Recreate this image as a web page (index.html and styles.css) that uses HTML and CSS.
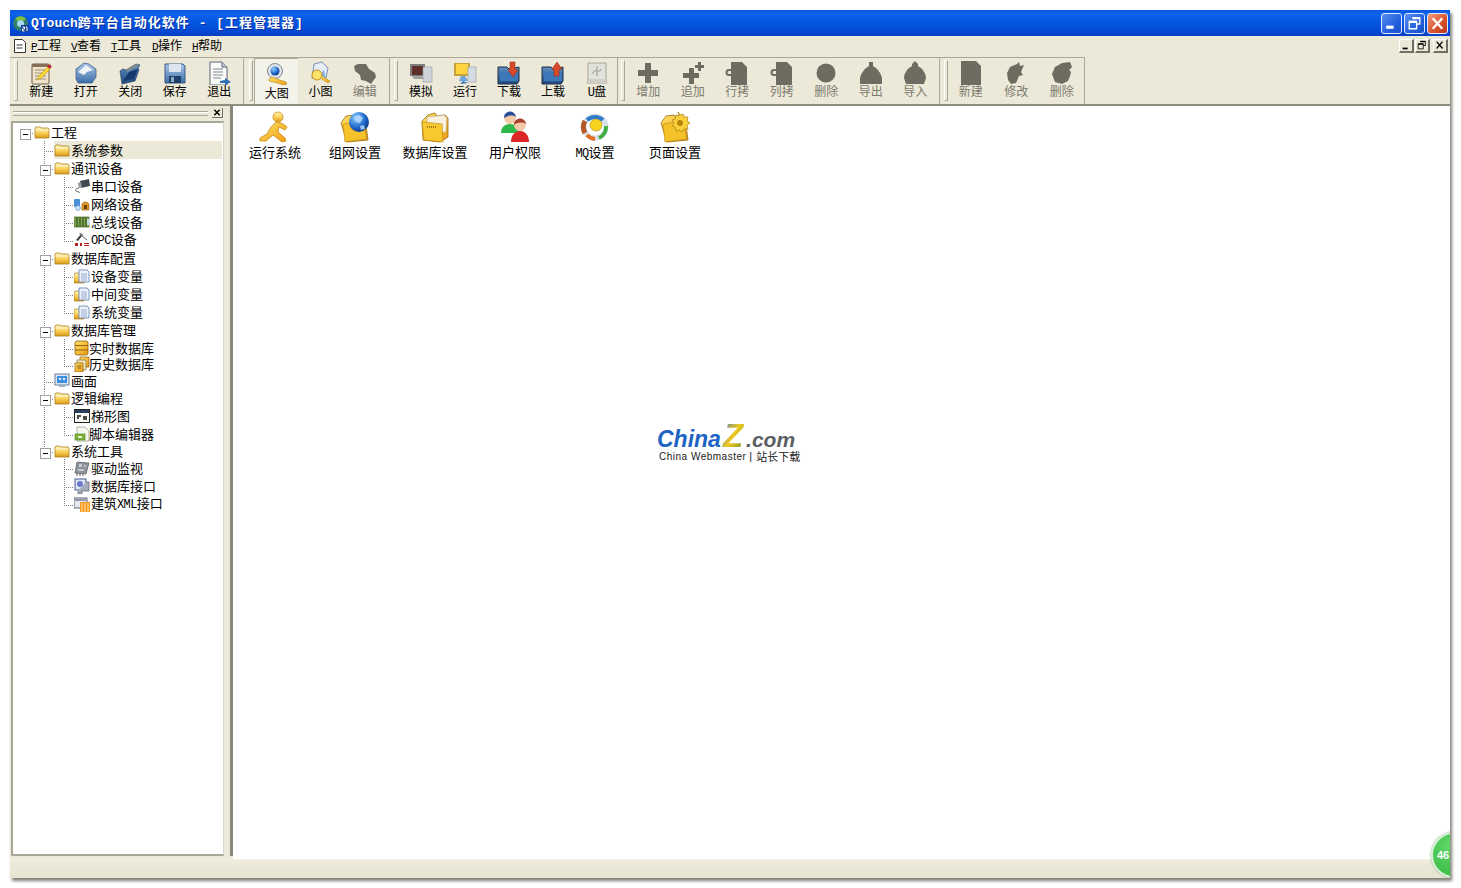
FILE: index.html
```html
<!DOCTYPE html>
<html lang="zh-CN">
<head>
<meta charset="utf-8">
<title>QTouch跨平台自动化软件</title>
<link rel="stylesheet" href="styles.css">
</head>
<body>
<svg class="defs" xmlns="http://www.w3.org/2000/svg">
<defs>
<linearGradient id="gy" x1="0" y1="0" x2="0" y2="1"><stop offset="0" stop-color="#fff3b8"/><stop offset=".5" stop-color="#fbd35c"/><stop offset="1" stop-color="#dd9a18"/></linearGradient>
<linearGradient id="ga" x1="0" y1="0" x2="1" y2="1"><stop offset="0" stop-color="#ffe36a"/><stop offset="1" stop-color="#ee9a10"/></linearGradient>
<linearGradient id="gb" x1="0" y1="0" x2="0" y2="1"><stop offset="0" stop-color="#a9c6ea"/><stop offset="1" stop-color="#3f6fa8"/></linearGradient>
<linearGradient id="gd" x1="0" y1="0" x2="0" y2="1"><stop offset="0" stop-color="#5f8fc0"/><stop offset="1" stop-color="#1f4a80"/></linearGradient>
<radialGradient id="gg" cx=".35" cy=".3" r=".8"><stop offset="0" stop-color="#8fd0ff"/><stop offset=".6" stop-color="#1f66c8"/><stop offset="1" stop-color="#0b2f7a"/></radialGradient>

<symbol id="t-new" viewBox="0 0 24 24"><rect x="3" y="3" width="17" height="20" rx="1" fill="#efe3c8" stroke="#6a5a48"/><rect x="3" y="3" width="17" height="3" fill="#8a6f58"/><path d="M6 9h11M6 12h11M6 15h11M6 18h11" stroke="#9a8f80"/><path d="M8 19l2-4 9-9 2 2-9 9z" fill="#ffd92a" stroke="#b89a10" stroke-width=".6"/><circle cx="20.500" cy="5.500" r="2" fill="#b5302a"/></symbol>
<symbol id="t-open" viewBox="0 0 24 24"><path d="M2 8l8-6 5 1 7 5v8l-4 6H4L2 18z" fill="url(#gb)" stroke="#33587f" stroke-width=".7"/><path d="M4 11l8-7 7 5-6 2-3 3z" fill="#eef3f8"/></symbol>
<symbol id="t-close" viewBox="0 0 24 24"><path d="M2 10l3-2 3 1L18 3l4 1-2 3 1 2-4 11-13 3z" fill="url(#gd)" stroke="#27405f" stroke-width=".7"/><path d="M5 20l6-9 9-3-4 10z" fill="#123a6c"/><path d="M8 9l10-6 3 1-12 7z" fill="#8a8f8a"/></symbol>
<symbol id="t-save" viewBox="0 0 24 24"><path d="M2 3h18l2 2v17H2z" fill="url(#gb)" stroke="#3b5a80"/><rect x="6" y="3" width="12" height="8" fill="#dde6f0"/><rect x="6" y="15" width="12" height="7" fill="#1f3f6a"/><rect x="8" y="16" width="3" height="5" fill="#8fa8c6"/></symbol>
<symbol id="t-exit" viewBox="0 0 24 24"><path d="M3 1h12l5 5v18H3z" fill="#fafaf6" stroke="#5a6478"/><path d="M15 1v5h5" fill="#c5cdd8" stroke="#5a6478"/><path d="M6 8h10M6 11h10M6 14h10M6 17h8" stroke="#7f8796"/><path d="M13 20l5-1v-2l6 4-6 3v-2h-5z" fill="#2f6eb5"/></symbol>
<symbol id="t-large" viewBox="0 0 24 24"><circle cx="10" cy="9" r="7.500" fill="#dfe3e8" stroke="#7d8794"/><circle cx="10" cy="9" r="4.500" fill="url(#gg)"/><path d="M4 17l3-2 5 2 3 1 6 2 1 2-3 1-7-2-8-2z" fill="url(#ga)" stroke="#a87a12" stroke-width=".5"/></symbol>
<symbol id="t-small" viewBox="0 0 24 24"><path d="M6 3l8-2 6 6-2 10H4z" fill="#e6edf7" stroke="#7a8fb0"/><path d="M4 16l3-6 5 3 4-4 2 9H5z" fill="#7fb3e6"/><circle cx="9" cy="14" r="5" fill="#ffe36a" stroke="#c48f1a"/><path d="M12 17l8 5 2-2-8-5z" fill="url(#ga)" stroke="#a87a12" stroke-width=".5"/></symbol>
<symbol id="t-blob1" viewBox="0 0 24 24"><path d="M1 5l4-2 8 0 3 5 6 4 1 4-5 7-5-3-5-1-1-5-5-4z" fill="#6e6b60"/></symbol>
<symbol id="t-sim" viewBox="0 0 24 24"><rect x="1" y="3" width="15" height="12" fill="#7f7f7f"/><rect x="3" y="5" width="11" height="9" fill="#5e2f2a"/><rect x="14" y="6" width="9" height="15" fill="#cfd4da" stroke="#8f98a5" stroke-width=".6"/><path d="M3 15h10l2 3H5z" fill="#a0a0a0"/></symbol>
<symbol id="t-run" viewBox="0 0 24 24"><rect x="1" y="2" width="16" height="13" fill="#c9a13a"/><rect x="3" y="3" width="12" height="10" fill="#ffd23f"/><rect x="15" y="6" width="8" height="15" fill="#d4dbe3" stroke="#8f98a5" stroke-width=".6"/><path d="M8 15h4l3 5H6z" fill="#6fa4d8"/><path d="M10 20l5 2-8 1z" fill="#2f6eb5"/></symbol>
<symbol id="t-down" viewBox="0 0 24 24"><path d="M1 6l9 0 2 2 10-2v14l-2 3H1z" fill="url(#gd)" stroke="#1c2f48"/><path d="M3 11h18v9H3z" fill="#3d79b8"/><path d="M13 1h5v7l3 1-5 7-5-7 2-1z" fill="#d84a2a" stroke="#8a2612" stroke-width=".5"/></symbol>
<symbol id="t-up" viewBox="0 0 24 24"><path d="M1 6l9 0 2 2 10-2v14l-2 3H1z" fill="url(#gd)" stroke="#1c2f48"/><path d="M3 11h18v9H3z" fill="#3d79b8"/><path d="M16 1l5 7-3 1v6h-5V9l-2-1z" fill="#d84a2a" stroke="#8a2612" stroke-width=".5"/></symbol>
<symbol id="t-usb" viewBox="0 0 24 24"><path d="M3 2h18v16l1 4H2l1-4z" fill="#e2e2dc" stroke="#a5a59c"/><path d="M3 18h18l1 4H2z" fill="#cfcfc8"/><path d="M12 5v10M12 9l-4 2v2M12 11l4-2v-1" fill="none" stroke="#9a9a92"/></symbol>
<symbol id="t-plus" viewBox="0 0 24 24"><path d="M9 2h6v7h7v6h-7v7H9v-7H2V9h7z" fill="#6e6b60"/></symbol>
<symbol id="t-plus2" viewBox="0 0 24 24"><path d="M8 7h5v5h5v5h-5v6H8v-6H2v-5h6z" fill="#6e6b60"/><path d="M17 1h3v3h3v3h-3v3h-3V7h-3V4h3z" fill="#6e6b60"/></symbol>
<symbol id="t-copy" viewBox="0 0 24 24"><path d="M6 1h11l5 5v18H6v-9H4a3 3 0 0 1 0-7h2zM4 10a1.500 1.500 0 0 0 0 3h2v-3z" fill="#6e6b60" fill-rule="evenodd"/></symbol>
<symbol id="t-circle" viewBox="0 0 24 24"><circle cx="12" cy="12" r="9.500" fill="#6e6b60"/></symbol>
<symbol id="t-bag" viewBox="0 0 24 24"><path d="M10 1h4v4c4 2 8 7 9 12v6H1v-6C2 12 6 7 10 5z" fill="#6e6b60"/></symbol>
<symbol id="t-bag2" viewBox="0 0 24 24"><path d="M12 0l3 3v2c4 2 8 7 8 12l-2 6H3l-2-6C1 12 5 7 9 5V3z" fill="#6e6b60"/></symbol>
<symbol id="t-page" viewBox="0 0 24 24"><path d="M2 0h15l5 5v19H2z" fill="#6e6b60"/></symbol>
<symbol id="t-blob2" viewBox="0 0 24 24"><path d="M3 12l3-6 7-3 2-2 1 4 4-1-3 7 2 3-4 1-3 7-5 1-3-4z" fill="#6e6b60"/></symbol>
<symbol id="t-blob3" viewBox="0 0 24 24"><path d="M2 13l3-7 7-4 8-1 2 5-3 3 2 2-1 4-2 5-6 3-7-2z" fill="#6e6b60"/></symbol>

<symbol id="b-run" viewBox="0 0 32 32"><circle cx="19" cy="6" r="5" fill="url(#gy)" stroke="#d48f10" stroke-width=".8"/><path d="M17 11c4 0 8 2 11 5l-2 3-6-3-1 5 7 6 1 3-4 1-9-7-7 6-6 0 0-3 7-4 4-7z" fill="url(#ga)" stroke="#c98a10" stroke-width=".8"/></symbol>
<symbol id="b-folder" viewBox="0 0 32 32"><path d="M2 12l5-7 8-1 2 3 9 0 3 22-21 2z" fill="url(#ga)" stroke="#9a6d0c" stroke-width=".8"/><path d="M6 31L4 13l20-3 4 18z" fill="#f6c22a" stroke="#b5860e" stroke-width=".6"/></symbol>
<symbol id="b-net" viewBox="0 0 32 32"><use href="#b-folder" width="32" height="32"/><circle cx="20" cy="11" r="10" fill="url(#gg)"/><path d="M15 6l5-2 4 3-3 5-4-1zM21 15l4-1 1 4-4 1z" fill="#bcdcff" opacity=".8"/></symbol>
<symbol id="b-db" viewBox="0 0 32 32"><path d="M3 10l6-6 7-2 2 3 8-1 3 3v19l-8 5-17-2z" fill="url(#ga)" stroke="#9a6d0c" stroke-width=".8"/><path d="M8 6l17-2 3 3-1 14-19 2z" fill="#f8f0dc" stroke="#b8a070" stroke-width=".6"/><path d="M3 11l20 2 1 18-19-2z" fill="#f9c730" stroke="#b5860e" stroke-width=".6"/><path d="M8 16h10" stroke="#8a6410" stroke-width="1.500" stroke-dasharray="1 1"/></symbol>
<symbol id="b-user" viewBox="0 0 32 32"><circle cx="11" cy="7" r="6" fill="#f3c9a8"/><path d="M5 7a6 6 0 0 1 12-1c-3-2-8-2-12 1z" fill="#2c4d9a"/><path d="M2 22c0-6 4-9 9-9s9 3 9 9z" fill="#2fb84a"/><circle cx="21" cy="14" r="6" fill="#f3c9a8"/><path d="M15 14a6 6 0 0 1 12-1c-3-2-8-2-12 1z" fill="#a8412c"/><path d="M12 31c0-7 4-11 9-11s9 4 9 11z" fill="#dc2626"/></symbol>
<symbol id="b-mq" viewBox="0 0 32 32"><circle cx="16" cy="16" r="11" fill="none" stroke="#d8dfe8" stroke-width="5"/><path d="M8 9a12 12 0 0 1 16 0" fill="none" stroke="#2e7cc8" stroke-width="4"/><path d="M27 15a12 12 0 0 1-7 12" fill="none" stroke="#3fae3f" stroke-width="4"/><path d="M6 22a12 12 0 0 1 0-12" fill="none" stroke="#b45a28" stroke-width="5"/><path d="M8 24a12 12 0 0 0 8 4" fill="none" stroke="#e0702a" stroke-width="4"/><circle cx="17" cy="14" r="6" fill="#f6d21f" stroke="#a88b0e" stroke-width=".6"/></symbol>
<symbol id="b-page" viewBox="0 0 32 32"><use href="#b-folder" width="32" height="32"/><path d="M19 1l2 3 3-1 1 3 4 0-1 4 3 2-3 2 1 4-4 0-2 3-3-2-3 1-1-4-3-1 2-3-2-3 3-1 1-4 3 1z" fill="#f9cf3a" stroke="#a87a10" stroke-width=".7"/><circle cx="21" cy="12" r="3" fill="#b5860e"/></symbol>

<symbol id="s-folder" viewBox="0 0 16 16"><path d="M1 14V4l1-1h4l1 1h7l1 1v9z" fill="url(#gy)" stroke="#a98024" stroke-width=".8"/><path d="M1.500 6h13" stroke="#fff8d8"/></symbol>
<symbol id="s-serial" viewBox="0 0 16 16"><path d="M6 3l9-2 1 7-9 2z" fill="#3f4a50"/><path d="M4 5l3-1 1 5-3 1z" fill="#8d989f"/><path d="M5 10c-3 0-4 2-3 3s4 0 3 2" fill="none" stroke="#55585a"/></symbol>
<symbol id="s-net" viewBox="0 0 16 16"><rect x="0" y="3" width="6" height="8" rx="1" fill="#4a8fd8"/><circle cx="4" cy="12" r="2.500" fill="#c8e0f8" stroke="#5a8abf" stroke-width=".5"/><path d="M8 8a4 4 0 0 1 7 0v6H8z" fill="#e09a22" stroke="#8a5a10" stroke-width=".6"/><rect x="10" y="9" width="3" height="4" fill="#6a3f08"/></symbol>
<symbol id="s-bus" viewBox="0 0 16 16"><rect x="0" y="3" width="15" height="10" fill="#7fa84a" stroke="#4a6a2a" stroke-width=".7"/><path d="M3 3v10M6 3v10M9 3v10M12 3v10" stroke="#23401a"/><path d="M13 5h3v6h-3z" fill="#c8d8e8"/></symbol>
<symbol id="s-opc" viewBox="0 0 16 16"><path d="M2 8l5-6 1.500 1.500L4 9z" fill="#444"/><path d="M5 1l4 1-1 3z" fill="#777"/><path d="M8 4l5 4" stroke="#666"/><path d="M1 11h3v3H1zM6 11h2v3H6zM10 11h5v1h-5zM10 13h5v1h-5z" fill="#c0201a"/></symbol>
<symbol id="s-var" viewBox="0 0 16 16"><path d="M0 15V6l1-1h4l1 1h4v9z" fill="url(#gy)" stroke="#a98024" stroke-width=".7"/><path d="M5 2h8l2 2v10H5z" fill="#eef3fa" stroke="#5a7fae" stroke-width=".8"/><path d="M7 6h6M7 8h6M7 10h6M7 12h6" stroke="#7d9cc4" stroke-width=".8"/></symbol>
<symbol id="s-db" viewBox="0 0 16 16"><rect x="1" y="1" width="13" height="14" rx="2" fill="url(#ga)" stroke="#8a5f10" stroke-width=".8"/><path d="M1 5.500h13M1 10h13" stroke="#8a5f10"/></symbol>
<symbol id="s-hist" viewBox="0 0 16 16"><path d="M6 1h9v10H6z" fill="url(#ga)" stroke="#8a5f10" stroke-width=".7"/><path d="M3 4h9v10H3z" fill="#f2e2b8" stroke="#8a7340" stroke-width=".7"/><path d="M1 7h8v9H1z" fill="url(#ga)" stroke="#8a5f10" stroke-width=".7"/><path d="M3 10h4M3 12h4" stroke="#8a5f10"/></symbol>
<symbol id="s-screen" viewBox="0 0 16 16"><rect x="1" y="1" width="14" height="11" fill="#dbe4f0" stroke="#6a7f9a"/><rect x="3" y="3" width="10" height="7" fill="#3f8fe0"/><path d="M5 5h2v2H5zM9 5h2v2H9z" fill="#dff0ff"/><path d="M5 12h6v2H5z" fill="#9eb0c6"/></symbol>
<symbol id="s-ladder" viewBox="0 0 16 16"><rect x=".500" y="1.500" width="15" height="13" fill="#f8f8f4" stroke="#222"/><rect x="1" y="2" width="14" height="3" fill="#28405e"/><path d="M3 8h4M3 10h2M9 9h4M9 11h4" stroke="#111" stroke-width="1.500"/></symbol>
<symbol id="s-script" viewBox="0 0 16 16"><path d="M3 1h8l4 4v10H3z" fill="#f4f7ee" stroke="#9aa58a" stroke-width=".8"/><rect x="1" y="8" width="10" height="6" fill="#7db23a" stroke="#55801f" stroke-width=".6"/><rect x="4" y="10" width="4" height="2" fill="#e8f4c8"/></symbol>
<symbol id="s-driver" viewBox="0 0 16 16"><path d="M3 2l12 1-3 11-11-1z" fill="#8e9299" stroke="#585c62" stroke-width=".7"/><path d="M5 4h3v3H5zM10 5h2v2h-2zM4 9h6v2H4z" fill="#c8ccd2"/><path d="M3 13v3M6 13v3M9 14v2" stroke="#585c62"/></symbol>
<symbol id="s-port" viewBox="0 0 16 16"><rect x="1" y="1" width="11" height="11" fill="#dfe5f4" stroke="#4a5f96"/><circle cx="6" cy="6" r="3" fill="#6a7ac8"/><path d="M12 4h3v9H8v3H4v-3" fill="#a6adba" stroke="#5a606c" stroke-width=".7"/></symbol>
<symbol id="s-xml" viewBox="0 0 16 16"><rect x="0" y="2" width="13" height="10" fill="#e6eaf0" stroke="#5a6474"/><rect x="1" y="3" width="11" height="2" fill="#8f9aae"/><rect x="6" y="6" width="10" height="10" fill="#f59a1e"/><path d="M8 7v9M11 7v9M14 7v9" stroke="#fde0a8"/></symbol>
</defs>
</svg>

<div class="window">
  <header class="titlebar">
    <svg class="app-icon" viewBox="0 0 16 16"><circle cx="7.500" cy="7.500" r="7.500" fill="#2f7f6a"/><circle cx="7.500" cy="7.500" r="3.500" fill="#a8d8ef"/><path d="M2 3a7 7 0 0 1 11 0l-3 2a4 4 0 0 0-5 0z" fill="#7fc23f"/><rect x="8" y="9" width="8" height="7" fill="#123f9e"/><path d="M9.500 11h2v2h-2v2h2M13 11h1v4" fill="none" stroke="#fff"/></svg>
    <h1 class="title"><span class="lat">QTouch</span>跨平台自动化软件<span class="lat2"> - [</span>工程管理器<span class="lat2">]</span></h1>
    <div class="win-btns">
      <span class="wb"><svg viewBox="0 0 18 18"><rect x="4" y="11" width="7" height="3" fill="#fff"/></svg></span>
      <span class="wb wb-max"><svg viewBox="0 0 18 18"><path d="M7 3.500h7v6h-3M4 7h7v7H4z" fill="none" stroke="#fff" stroke-width="1.300"/><path d="M7 4h7M4 7.500h7" stroke="#fff" stroke-width="2"/></svg></span>
      <span class="wb wb-close"><svg viewBox="0 0 18 18"><path d="M4.500 4l9 10M13.500 4l-9 10" stroke="#fff" stroke-width="2.200"/></svg></span>
    </div>
  </header>

  <nav class="menubar">
    <svg class="menu-icon" viewBox="0 0 14 14"><path d="M1.500.5h8l3 3v10h-11z" fill="#fff" stroke="#333"/><path d="M3.500 6h6M3.500 9h6" stroke="#333"/></svg>
    <span class="menu"><u class="k">P</u>工程</span>
    <span class="menu"><u class="k">V</u>查看</span>
    <span class="menu m3"><u class="k">T</u>工具</span>
    <span class="menu"><u class="k">D</u>操作</span>
    <span class="menu"><u class="k">H</u>帮助</span>
    <div class="mdi-btns">
      <span class="mb"><svg viewBox="0 0 14 13"><rect x="3" y="9" width="6" height="2" fill="#000"/></svg></span>
      <span class="mb"><svg viewBox="0 0 14 13"><path d="M5 1.500h6v5H9M2.500 4.500h6v6h-6z" fill="none" stroke="#000"/><path d="M5 2h6M2.500 5h6" stroke="#000" stroke-width="1.500"/></svg></span>
      <span class="mb mb-x"><svg viewBox="0 0 14 13"><path d="M3 2l7 8M10 2l-7 8" stroke="#000" stroke-width="1.500"/></svg></span>
    </div>
  </nav>

  <div class="toolbar">
    <div class="tgroup g1"><i class="grip"></i>
      <div class="tbtn"><svg class="ticon"><use href="#t-new"/></svg><span>新建</span></div>
      <div class="tbtn"><svg class="ticon"><use href="#t-open"/></svg><span>打开</span></div>
      <div class="tbtn"><svg class="ticon"><use href="#t-close"/></svg><span>关闭</span></div>
      <div class="tbtn"><svg class="ticon"><use href="#t-save"/></svg><span>保存</span></div>
      <div class="tbtn"><svg class="ticon"><use href="#t-exit"/></svg><span>退出</span></div>
    </div>
    <div class="tgroup g2"><i class="grip"></i>
      <div class="tbtn pressed"><svg class="ticon"><use href="#t-large"/></svg><span>大图</span></div>
      <div class="tbtn"><svg class="ticon"><use href="#t-small"/></svg><span>小图</span></div>
      <div class="tbtn off"><svg class="ticon"><use href="#t-blob1"/></svg><span>编辑</span></div>
    </div>
    <div class="tgroup g3"><i class="grip"></i>
      <div class="tbtn"><svg class="ticon"><use href="#t-sim"/></svg><span>模拟</span></div>
      <div class="tbtn"><svg class="ticon"><use href="#t-run"/></svg><span>运行</span></div>
      <div class="tbtn"><svg class="ticon"><use href="#t-down"/></svg><span>下载</span></div>
      <div class="tbtn"><svg class="ticon"><use href="#t-up"/></svg><span>上载</span></div>
      <div class="tbtn"><svg class="ticon"><use href="#t-usb"/></svg><span><span class="lat">U</span>盘</span></div>
    </div>
    <div class="tgroup g4"><i class="grip"></i>
      <div class="tbtn off"><svg class="ticon"><use href="#t-plus"/></svg><span>增加</span></div>
      <div class="tbtn off"><svg class="ticon"><use href="#t-plus2"/></svg><span>追加</span></div>
      <div class="tbtn off"><svg class="ticon"><use href="#t-copy"/></svg><span>行拷</span></div>
      <div class="tbtn off"><svg class="ticon"><use href="#t-copy"/></svg><span>列拷</span></div>
      <div class="tbtn off"><svg class="ticon"><use href="#t-circle"/></svg><span>删除</span></div>
      <div class="tbtn off"><svg class="ticon"><use href="#t-bag"/></svg><span>导出</span></div>
      <div class="tbtn off"><svg class="ticon"><use href="#t-bag2"/></svg><span>导入</span></div>
    </div>
    <div class="tgroup g5"><i class="grip"></i>
      <div class="tbtn off"><svg class="ticon"><use href="#t-page"/></svg><span>新建</span></div>
      <div class="tbtn off"><svg class="ticon"><use href="#t-blob2"/></svg><span>修改</span></div>
      <div class="tbtn off"><svg class="ticon"><use href="#t-blob3"/></svg><span>删除</span></div>
    </div>
  </div>

  <div class="content">
    <aside class="dock">
      <div class="dock-head"><i class="dock-grip"></i><span class="dock-x"><svg viewBox="0 0 11 10"><path d="M2.500 2l6 6M8.500 2l-6 6" stroke="#000" stroke-width="1.600"/></svg></span></div>
      <div class="tree">
        <div class="row"><i class="c xr"></i><div class="node"><svg class="nicon"><use href="#s-folder"/></svg><span class="lbl">工程</span></div></div>
        <div class="row"><i class="c"></i><i class="c t"></i><div class="node sel"><svg class="nicon"><use href="#s-folder"/></svg><span class="lbl">系统参数</span></div></div>
        <div class="row"><i class="c"></i><i class="c x"></i><div class="node"><svg class="nicon"><use href="#s-folder"/></svg><span class="lbl">通讯设备</span></div></div>
        <div class="row"><i class="c"></i><i class="c v"></i><i class="c t"></i><div class="node"><svg class="nicon"><use href="#s-serial"/></svg><span class="lbl">串口设备</span></div></div>
        <div class="row"><i class="c"></i><i class="c v"></i><i class="c t"></i><div class="node"><svg class="nicon"><use href="#s-net"/></svg><span class="lbl">网络设备</span></div></div>
        <div class="row"><i class="c"></i><i class="c v"></i><i class="c t"></i><div class="node"><svg class="nicon"><use href="#s-bus"/></svg><span class="lbl">总线设备</span></div></div>
        <div class="row"><i class="c"></i><i class="c v"></i><i class="c l"></i><div class="node"><svg class="nicon"><use href="#s-opc"/></svg><span class="lbl"><span class="lat">OPC</span>设备</span></div></div>
        <div class="row"><i class="c"></i><i class="c x"></i><div class="node"><svg class="nicon"><use href="#s-folder"/></svg><span class="lbl">数据库配置</span></div></div>
        <div class="row"><i class="c"></i><i class="c v"></i><i class="c t"></i><div class="node"><svg class="nicon"><use href="#s-var"/></svg><span class="lbl">设备变量</span></div></div>
        <div class="row"><i class="c"></i><i class="c v"></i><i class="c t"></i><div class="node"><svg class="nicon"><use href="#s-var"/></svg><span class="lbl">中间变量</span></div></div>
        <div class="row"><i class="c"></i><i class="c v"></i><i class="c l"></i><div class="node"><svg class="nicon"><use href="#s-var"/></svg><span class="lbl">系统变量</span></div></div>
        <div class="row"><i class="c"></i><i class="c x"></i><div class="node"><svg class="nicon"><use href="#s-folder"/></svg><span class="lbl">数据库管理</span></div></div>
        <div class="row h17"><i class="c"></i><i class="c v"></i><i class="c t"></i><div class="node tight"><svg class="nicon"><use href="#s-db"/></svg><span class="lbl">实时数据库</span></div></div>
        <div class="row h16"><i class="c"></i><i class="c v"></i><i class="c l"></i><div class="node tight"><svg class="nicon"><use href="#s-hist"/></svg><span class="lbl">历史数据库</span></div></div>
        <div class="row h17"><i class="c"></i><i class="c t"></i><div class="node"><svg class="nicon"><use href="#s-screen"/></svg><span class="lbl">画面</span></div></div>
        <div class="row"><i class="c"></i><i class="c x"></i><div class="node"><svg class="nicon"><use href="#s-folder"/></svg><span class="lbl">逻辑编程</span></div></div>
        <div class="row"><i class="c"></i><i class="c v"></i><i class="c t"></i><div class="node"><svg class="nicon"><use href="#s-ladder"/></svg><span class="lbl">梯形图</span></div></div>
        <div class="row h17"><i class="c"></i><i class="c v"></i><i class="c l"></i><div class="node tight"><svg class="nicon"><use href="#s-script"/></svg><span class="lbl">脚本编辑器</span></div></div>
        <div class="row h17"><i class="c"></i><i class="c xl"></i><div class="node"><svg class="nicon"><use href="#s-folder"/></svg><span class="lbl">系统工具</span></div></div>
        <div class="row"><i class="c"></i><i class="c"></i><i class="c t"></i><div class="node"><svg class="nicon"><use href="#s-driver"/></svg><span class="lbl">驱动监视</span></div></div>
        <div class="row"><i class="c"></i><i class="c"></i><i class="c t"></i><div class="node"><svg class="nicon"><use href="#s-port"/></svg><span class="lbl">数据库接口</span></div></div>
        <div class="row"><i class="c"></i><i class="c"></i><i class="c l"></i><div class="node"><svg class="nicon"><use href="#s-xml"/></svg><span class="lbl">建筑<span class="lat">XML</span>接口</span></div></div>
      </div>
    </aside>
    <div class="splitter"></div>
    <main class="main">
      <div class="bigicons">
        <div class="big"><svg class="bicon"><use href="#b-run"/></svg><span>运行系统</span></div>
        <div class="big"><svg class="bicon"><use href="#b-net"/></svg><span>组网设置</span></div>
        <div class="big"><svg class="bicon"><use href="#b-db"/></svg><span>数据库设置</span></div>
        <div class="big"><svg class="bicon"><use href="#b-user"/></svg><span>用户权限</span></div>
        <div class="big"><svg class="bicon"><use href="#b-mq"/></svg><span><span class="lat">MQ</span>设置</span></div>
        <div class="big"><svg class="bicon"><use href="#b-page"/></svg><span>页面设置</span></div>
      </div>
      <div class="watermark">
        <div class="wm-logo"><span class="wm-china">China</span><span class="wm-z">Z</span><span class="wm-com">.com</span></div>
        <div class="wm-sub"><span class="wm-en">China Webmaster</span><span class="wm-bar">|</span><span>站长下载</span></div>
      </div>
    </main>
  </div>
  <footer class="status"></footer>
  <div class="badge">46</div>
</div>
</body>
</html>
```

FILE: styles.css
```css
* { box-sizing: border-box; }
html, body { margin: 0; height: 100%; background: #fff; overflow: hidden; }
body { padding: 10px 11px 10px 10px; font-family: "Noto Sans CJK SC", "Liberation Sans", sans-serif; font-size: 12px; color: #000; }
.defs { position: absolute; width: 0; height: 0; }
.lat { font-family: "Liberation Mono", monospace; font-size: 12px; letter-spacing: -.6px; }

.window { position: relative; width: 1440px; height: 868px; display: flex; flex-direction: column; background: #ece9d8; overflow: hidden; box-shadow: 2px 3px 3px rgba(60, 60, 50, .65); }

.titlebar { flex: none; height: 26px; display: flex; align-items: center; padding: 0 2px 0 3px; background: linear-gradient(#0a55dc 0, #0e62ec 12%, #0455e0 50%, #0447d2 85%, #0a3fc0 100%); }
.app-icon { width: 16px; height: 16px; flex: none; margin-top: 2px; }
.title { margin: 0 0 0 2px; font-size: 13px; line-height: 16px; font-weight: 700; color: #fff; letter-spacing: 1px; white-space: pre; text-shadow: 1px 1px 0 #0a2f9a; }
.title .lat { font-size: 13px; font-weight: 700; letter-spacing: 0; }
.lat2 { font-family: "Liberation Mono", monospace; font-size: 13px; font-weight: 700; }
.win-btns { margin-left: auto; display: flex; gap: 2px; }
.wb { width: 21px; height: 21px; display: flex; border: 1px solid #dfe8ff; border-radius: 3px; background: linear-gradient(135deg, #5a90f0, #2360dd 60%, #1a4fc8); }
.wb svg { width: 100%; height: 100%; }
.wb-close { background: linear-gradient(135deg, #f0a080, #d8502a 60%, #b83a1a); }

.menubar { flex: none; height: 20px; display: flex; align-items: center; padding: 0 2px 0 3px; }
.menu-icon { width: 14px; height: 14px; flex: none; margin-right: 4px; }
.menu { line-height: 16px; white-space: nowrap; width: 40px; flex: none; }
.m3 { width: 41px; }
.k { font-family: "Liberation Mono", monospace; font-size: 11px; letter-spacing: -.6px; }
.mdi-btns { margin-left: auto; display: flex; gap: 1px; }
.mb { width: 15px; height: 14px; display: flex; background: #ece9d8; border-right: 2px solid #716f64; border-bottom: 2px solid #716f64; border-top: 1px solid #fff; border-left: 1px solid #fff; }
.mb svg { width: 100%; height: 100%; }
.mb-x { margin-left: 2px; }

.toolbar { flex: none; height: 50px; display: flex; padding-top: 1px; border-bottom: 2px solid #8f8d7e; }
.tgroup { flex: none; display: flex; align-items: stretch; border-top: 1px solid #aca899; border-right: 1px solid #aca899; }
.g1 { width: 234px; padding-left: 4px; }
.g2 { width: 146px; padding-left: 5px; }
.g3 { width: 228px; padding-left: 4px; }
.g4 { width: 322px; padding-left: 3px; }
.g5 { width: 145px; padding-left: 4px; }
.grip { flex: none; width: 4px; margin: 2px 1px 3px 0; border: 1px solid #aca899; border-top-color: #fff; border-left-color: #fff; background: #ece9d8; }
.g5 .grip { margin-right: 0; }
.tbtn { flex: none; width: 44.5px; display: flex; flex-direction: column; align-items: center; padding-top: 3px; line-height: 14px; white-space: nowrap; }
.g2 .tbtn { width: 44.3px; }
.g3 .tbtn { width: 44px; }
.g5 .tbtn { width: 45.5px; }
.ticon { width: 24px; height: 24px; flex: none; margin-bottom: -1px; }
.off { color: #7d7b70; }
.pressed { background: #f4f3ea; border-left: 1px solid #aca899; border-top: 1px solid #aca899; }
.pressed span { margin-top: 1px; }

.content { flex: 1; min-height: 0; display: flex; }
.dock { flex: none; width: 216px; display: flex; flex-direction: column; background: #ece9d8; }
.dock-head { flex: none; height: 15px; display: flex; align-items: center; padding: 0 3px; }
.dock-grip { flex: 1; height: 5px; margin-top: -1px; border-top: 1px solid #aca899; border-bottom: 1px solid #aca899; background: linear-gradient(#fff 0 1px, #ece9d8 1px); }
.dock-x { flex: none; width: 11px; height: 10px; margin: -1px 0 0 4px; display: flex; background: #ece9d8; border-right: 1px solid #716f64; border-bottom: 1px solid #716f64; }
.dock-x svg { width: 100%; height: 100%; }
.tree { flex: 1; margin: 0 2px 2px 1px; padding: 0 0 0 1px; background: #fff; border: 2px solid #a9a798; border-right: 1px solid #d8d6c8; }

.row { display: flex; height: 18px; align-items: stretch; }
.h17 { height: 17px; }
.h16 { height: 16px; }
.c { flex: none; width: 20px; display: block; }
.v, .t, .l, .x, .xl { background-repeat: no-repeat; }
.v { background-image: repeating-linear-gradient(#808080 0 1px, transparent 1px 2px); background-size: 1px 100%; background-position: 10px 0; }
.t, .x { background-image: repeating-linear-gradient(#808080 0 1px, transparent 1px 2px), repeating-linear-gradient(90deg, #808080 0 1px, transparent 1px 2px); background-size: 1px 100%, 10px 1px; background-position: 10px 0, 10px 10px; }
.l, .xl { background-image: repeating-linear-gradient(#808080 0 1px, transparent 1px 2px), repeating-linear-gradient(90deg, #808080 0 1px, transparent 1px 2px); background-size: 1px 11px, 10px 1px; background-position: 10px 0, 10px 10px; }
.x, .xl, .xr { position: relative; }
.xr { background-image: repeating-linear-gradient(90deg, #808080 0 1px, transparent 1px 2px); background-size: 10px 1px; background-position: 10px 10px; background-repeat: no-repeat; }
.x::after, .xl::after, .xr::after { content: ""; position: absolute; left: 6px; top: 6px; width: 9px; height: 9px; border: 1px solid #a0a0a0; background: linear-gradient(#000 0 0) center / 5px 1px no-repeat, #fff; }
.node { flex: 1; min-width: 0; display: flex; align-items: center; margin-right: 1px; }
.nicon { width: 16px; height: 16px; flex: none; }
.lbl { font-size: 13px; line-height: 16px; margin-left: 1px; white-space: nowrap; }
.tight .lbl { margin-left: -1px; }
.sel { background: #ece9d8; }

.splitter { flex: none; width: 7px; margin-bottom: 2px; background: #ece9d8; border-right: 3px solid #8a8878; }
.main { flex: 1; min-width: 0; position: relative; background: #fff; margin-bottom: -1px; z-index: 1; }
.bigicons { display: flex; padding: 5px 0 0 2px; }
.big { flex: none; width: 80px; display: flex; flex-direction: column; align-items: center; font-size: 13px; line-height: 16px; white-space: nowrap; gap: 1px; }
.bicon { width: 32px; height: 32px; flex: none; }

.watermark { position: absolute; left: 424px; top: 316px; width: 146px; }
.wm-logo { height: 28px; line-height: 28px; font-family: "Liberation Sans", sans-serif; font-weight: 700; font-style: italic; white-space: nowrap; }
.wm-china { font-size: 23px; color: #1c63c4; }
.wm-z { font-size: 33px; padding: 0 3px 0 2px; background: linear-gradient(120deg, #2f76c9 0, #f0c81e 50%, #5a8a2a 100%); -webkit-background-clip: text; background-clip: text; color: transparent; }
.wm-com { font-size: 21px; color: #5c5f63; }
.wm-sub { display: flex; align-items: center; margin: 0 0 0 2px; font-size: 11px; line-height: 13px; color: #222; white-space: nowrap; }
.wm-en { font-family: "Liberation Sans", sans-serif; font-size: 10px; letter-spacing: .5px; }
.wm-bar { margin: 0 4px 0 3px; font-family: "Liberation Sans", sans-serif; }

.status { flex: none; height: 20px; background: linear-gradient(#f2f0e4, #ece9d8 30%, #e6e3d2); }
.badge { position: absolute; right: -27px; bottom: 0; width: 46px; height: 46px; padding-left: 4px; border-radius: 50%; border: 2px solid #d6f0d6; background: radial-gradient(circle at 40% 30%, #63d66a, #2db53c); color: #fff; font: 700 11px/42px "Liberation Sans", sans-serif; z-index: 2; box-shadow: 0 0 2px #6a8a6a; }
```
